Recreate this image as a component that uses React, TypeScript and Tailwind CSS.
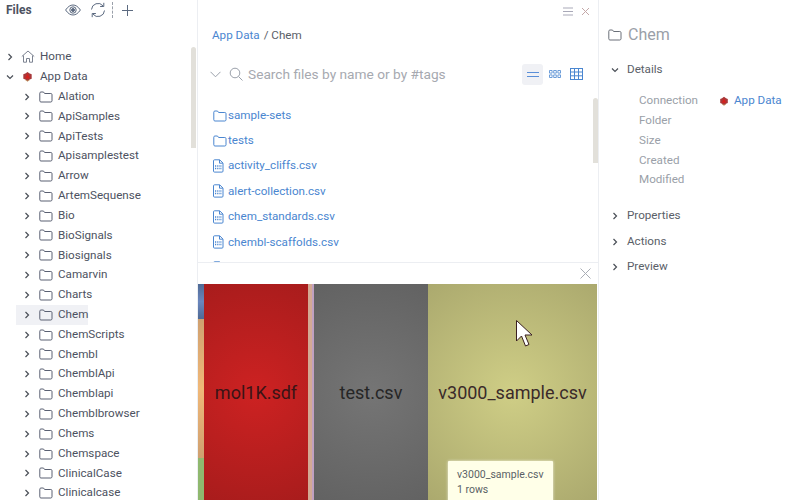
import React from "react";

const names = [
  "Alation", "ApiSamples", "ApiTests", "Apisamplestest", "Arrow", "ArtemSequense", "Bio", "BioSignals",
  "Biosignals", "Camarvin", "Charts", "Chem", "ChemScripts", "Chembl", "ChemblApi", "Chemblapi",
  "Chemblbrowser", "Chems", "Chemspace", "ClinicalCase", "Clinicalcase",
];

const files = ["activity_cliffs.csv", "alert-collection.csv", "chem_standards.csv", "chembl-scaffolds.csv"];

const Chevron = ({ open = false }: { open?: boolean }) => (
  <svg width="10" height="10" viewBox="0 0 10 10" fill="none" stroke="#4a4f57" strokeWidth="1.2">
    {open ? <path d="M2 3.500 5 6.500 8 3.500" /> : <path d="M3.500 2 6.500 5 3.500 8" />}
  </svg>
);

const Folder = ({ color = "#5a6072", size = 14 }: { color?: string; size?: number }) => (
  <svg width={size} height={size - 2} viewBox="0 0 14 12" fill="none" stroke={color} strokeWidth="1" className="shrink-0">
    <path d="M.8 2.200c0-.7.4-1.200 1.100-1.200h2.600l1.100 1.500h6.200c.7 0 1.200.4 1.200 1.100v6.200c0 .7-.5 1.200-1.200 1.200H1.900c-.7 0-1.100-.5-1.100-1.200z" />
  </svg>
);

const AppLogo = ({ size = 10 }: { size?: number }) => (
  <svg width={size} height={size} viewBox="0 0 10 10">
    <path d="M5 .8 7 2.200 8.800 3v4L7 7.800 5 9.200 3 7.800 1.200 7V3L3 2.200z" fill="#a8383a" />
    <path d="M5 2.200 7.200 6.800H2.800z" fill="#d8201c" />
    <path d="M3 8 5 9.300 7 8" fill="none" stroke="#b58a4a" strokeWidth=".7" />
  </svg>
);

const CsvFile = () => (
  <svg width="11" height="14" viewBox="0 0 11 14" fill="none" stroke="#4a86d0" strokeWidth="1" className="shrink-0">
    <path d="M1.500.8h5.200l3.300 3.300v8a1 1 0 0 1-1 1H1.500a1 1 0 0 1-1-1V1.800a1 1 0 0 1 1-1z" />
    <path d="M6.500 1v3.200h3.300" />
    <path d="M2 7h7M2 9.500h7" strokeDasharray="1 .8" strokeWidth="1.400" />
  </svg>
);

const TreeRow = ({ name, active }: { name: string; active: boolean }) => (
  <div className={`ml-[16px] flex h-[19.84px] w-max items-center pl-[6px] ${active ? "bg-[#f0f1f5]" : ""}`}>
    <span className="flex w-[17px] shrink-0"><Chevron /></span>
    <Folder />
    <span className="ml-[5px] whitespace-nowrap">{name}</span>
  </div>
);

const DetailRow = ({ label, children }: { label: string; children?: React.ReactNode }) => (
  <div className="flex h-[19.8px] items-center">
    <span className="w-[80px] text-[#9a9fa8]">{label}</span>
    {children}
  </div>
);

const Section = ({ label }: { label: string }) => (
  <div className="flex h-[25.5px] items-center text-[#5a6068]">
    <span className="w-[17px]"><Chevron /></span>
    {label}
  </div>
);

export default function App() {
  return (
    <div className="relative flex h-[500px] w-[800px] overflow-hidden bg-white font-['Roboto',sans-serif] text-[11.65px]">
      {/* left tree */}
      <div className="flex w-[198px] shrink-0 flex-col overflow-hidden border-r border-[#eceef2]">
        <div className="flex h-[20px] shrink-0 items-center pl-[6px] text-[12px] text-[#4d5261]">
          <span className="w-[59px] font-bold">Files</span>
          <svg width="16" height="12" viewBox="0 0 16 12" fill="none" stroke="#5c6a80" strokeWidth="1" className="mr-[9px]">
            <path d="M.6 6C3 2.500 5.400 1 8 1s5 1.500 7.400 5C13 9.500 10.600 11 8 11S3 9.500.6 6z" />
            <circle cx="8" cy="6" r="3.200" />
            <circle cx="8" cy="6" r="1.500" fill="#5c6a80" />
          </svg>
          <svg width="16" height="16" viewBox="0 0 16 16" fill="none" stroke="#5c6a80" strokeWidth="1">
            <path d="M1.500 7.500A6.500 6.500 0 0 1 13 3.800" />
            <path d="M14.500 8.500A6.500 6.500 0 0 1 3 12.200" />
            <path d="M13.800.8V4.500h-3.700M2.200 15.200V11.500h3.700" />
          </svg>
          <span className="ml-[6px] h-[16px] border-l border-dashed border-[#9aa0aa]" />
          <svg width="13" height="13" viewBox="0 0 13 13" stroke="#5c6a80" strokeWidth="1" className="ml-[8px]">
            <path d="M6.500 1v11M1 6.500h11" />
          </svg>
        </div>
        <div className="relative mt-[27px] min-h-0 flex-1 text-[#4d5261]">
          <div className="absolute right-[1px] top-0 h-[101px] w-[5px] rounded-t-[3px] bg-[#e2e0da]" />
          <div className="flex h-[19.86px] items-center pl-[5px]">
            <span className="flex w-[16px]"><Chevron /></span>
            <svg width="14" height="13" viewBox="0 0 14 13" fill="none" stroke="#7b8290" strokeWidth="1">
              <path d="M.8 6.500 7 1l6.200 5.500M2.500 5.500v6.700h3V8.500h3v3.700h3V5.500" />
            </svg>
            <span className="ml-[5px]">Home</span>
          </div>
          <div className="flex h-[19.86px] items-center pl-[5px]">
            <span className="flex w-[16px]"><Chevron open /></span>
            <span className="ml-[1px] flex w-[13px]"><AppLogo size={11} /></span>
            <span className="ml-[5px]">App Data</span>
          </div>
          {names.map((n) => (
            <TreeRow key={n} name={n} active={n === "Chem"} />
          ))}
        </div>
      </div>

      {/* center */}
      <div className="flex w-[401px] shrink-0 flex-col border-r border-[#eceef2]">
        <div className="flex h-[263px] shrink-0 flex-col overflow-hidden border-b border-[#eceef2]">
          <div className="relative">
            <div className="absolute right-[8px] top-[7px] flex items-center gap-[8px]">
              <svg width="10" height="9" viewBox="0 0 10 9" stroke="#a9a9b8" strokeWidth="1"><path d="M0 1h10M0 4.500h10M0 8h10" /></svg>
              <svg width="9" height="9" viewBox="0 0 9 9" stroke="#c4a8a8" strokeWidth="1"><path d="M1 1l7 7M8 1 1 8" /></svg>
            </div>
          </div>
          <div className="mt-[28px] flex h-[15px] shrink-0 items-center pl-[14px]">
            <span className="text-[#4a86d0]">App Data</span>
            <span className="ml-[4px] text-[#5a6068]">/ Chem</span>
          </div>
          <div className="mt-[20px] flex h-[22px] shrink-0 items-center pl-[12px] pr-[15px]">
            <svg width="11" height="7" viewBox="0 0 11 7" fill="none" stroke="#9aa0aa" strokeWidth="1"><path d="M.5.8 5.500 5.800 10.500.8" /></svg>
            <svg width="14" height="14" viewBox="0 0 14 14" fill="none" stroke="#9aa0aa" strokeWidth="1" className="ml-[8px]">
              <circle cx="6" cy="6" r="4.800" /><path d="M9.500 9.500 13.500 13.500" />
            </svg>
            <span className="ml-[5px] flex-1 text-[13.7px] text-[#a6a9b0]">Search files by name or by #tags</span>
            <div className="flex h-[21px] w-[21px] items-center justify-center rounded-[3px] bg-[#f0f1f5]">
              <svg width="12" height="5" viewBox="0 0 12 5" stroke="#5a8fd8" strokeWidth="1"><path d="M0 .5h12M0 4.500h12" /></svg>
            </div>
            <svg width="12" height="8" viewBox="0 0 12 8" fill="none" stroke="#4a86d0" strokeWidth=".8" className="ml-[6px]">
              <path d="M.5.5h2.600v2.600H.5zM4.700.5h2.600v2.600H4.700zM8.900.5h2.600v2.600H8.900zM.5 4.900h2.600v2.600H.5zM4.700 4.900h2.600v2.600H4.700zM8.900 4.900h2.600v2.600H8.900z" />
            </svg>
            <svg width="13" height="12" viewBox="0 0 13 12" fill="none" stroke="#4a86d0" strokeWidth="1" className="ml-[9px]">
              <rect x=".5" y=".5" width="12" height="11" /><path d="M0 4h13M0 7.800h13M4.500 0v12M8.500 0v12" />
            </svg>
          </div>
          <div className="relative mt-[13px] min-h-0 flex-1 pl-[15px] pt-[5px] text-[#4a86d0]">
            <div className="absolute right-0 top-0 h-[65px] w-[5px] rounded-t-[3px] bg-[#e2e0da]" />
            <div className="flex h-[25px] items-center gap-[1px]"><Folder color="#4a86d0" /> sample-sets</div>
            <div className="flex h-[25px] items-center gap-[1px]"><Folder color="#4a86d0" /> tests</div>
            {files.map((f) => (
              <div key={f} className="flex h-[25.5px] items-center gap-[4px]">
                <CsvFile /> {f}
              </div>
            ))}
            {/* next row is cut off by the panel edge, only its icon peeks through */}
            <div className="flex h-[25.5px] items-center"><CsvFile /></div>
          </div>
        </div>
        <div className="flex h-[21px] shrink-0 items-start justify-end pr-[7px] pt-[5px]">
          <svg width="11" height="11" viewBox="0 0 11 11" stroke="#a9adb5" strokeWidth="1"><path d="M.5.500l10 10M10.500.500l-10 10" /></svg>
        </div>
        <div className="flex flex-1 pr-[1px] text-[18px] text-[#3a2a2a]">
          <div className="flex w-[6px] shrink-0 flex-col">
            <div className="h-[35px] bg-[linear-gradient(#4f6a95,#6a86bd_50%,#4f6a95)]" />
            <div className="h-[139px] bg-[linear-gradient(#cfa070,#f0b878_50%,#cfa070)]" />
            <div className="flex-1 bg-[#8fb86f]" />
          </div>
          <div className="flex w-[104px] shrink-0 items-center justify-center bg-[radial-gradient(circle,#cd2222,#a81c1c)] text-[#3a1416]">mol1K.sdf</div>
          <div className="flex w-[6px] shrink-0">
            <div className="flex-1 bg-[#d3a994]" />
            <div className="w-[2px] bg-[#c0a0c0]" />
          </div>
          <div className="flex w-[114px] shrink-0 items-center justify-center bg-[radial-gradient(circle,#757575,#626262)] text-[#262626]">test.csv</div>
          <div className="flex flex-1 items-center justify-center bg-[radial-gradient(circle,#cfce86,#aba96e)]">v3000_sample.csv</div>
        </div>
      </div>

      {/* right */}
      <div className="flex-1 pl-[9px]">
        <div className="mt-[26px] flex h-[17px] items-center">
          <Folder color="#6a6f78" />
          <span className="ml-[6px] text-[16px] text-[#9a9fa8]">Chem</span>
        </div>
        <div className="mt-[14px] flex h-[25px] items-center pl-[2px] text-[#5a6068]">
          <span className="w-[17px]"><Chevron open /></span>Details
        </div>
        <div className="mt-[9px] pl-[31px]">
          <DetailRow label="Connection">
            <AppLogo /><span className="ml-[5px] text-[#4a86d0]">App Data</span>
          </DetailRow>
          <DetailRow label="Folder" />
          <DetailRow label="Size" />
          <DetailRow label="Created" />
          <DetailRow label="Modified" />
        </div>
        <div className="mt-[13.5px] pl-[2px]">
          <Section label="Properties" />
          <Section label="Actions" />
          <Section label="Preview" />
        </div>
      </div>

      {/* tooltip and pointer over the picture */}
      <div className="absolute left-[448px] top-[461px] h-[50px] w-[105px] rounded-[1px] bg-[#ffffe8] px-[9px] pt-[6px] text-[10.5px] leading-[15px] text-[#5a5f66] shadow-[0_0_3px_rgba(255,255,255,0.8)]">
        <div>v3000_sample.csv</div>
        <div>1 rows</div>
      </div>
      <svg className="absolute left-[515px] top-[319px]" width="20" height="29" viewBox="0 0 20 29">
        <path d="M1.500 1.500V22l5-5 4 10 3.500-1.500-4-9.500h7z" fill="#fff" stroke="#3a2020" strokeWidth="1" />
      </svg>
    </div>
  );
}
